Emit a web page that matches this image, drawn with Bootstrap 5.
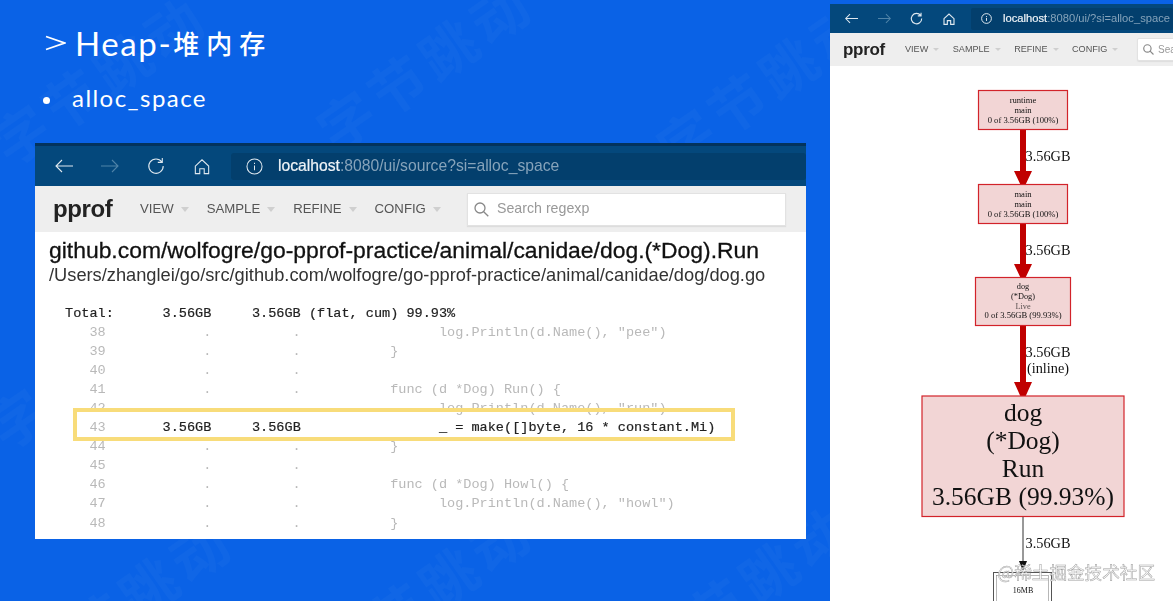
<!DOCTYPE html>
<html lang="zh">
<head>
<meta charset="utf-8">
<title>Heap</title>
<link href="https://cdn.jsdelivr.net/npm/bootstrap@5.3.0/dist/css/bootstrap.min.css" rel="stylesheet">
<style>
html,body{width:1173px;height:601px;overflow:hidden;margin:0;background:#0a62e6;}
.stage{width:1173px;height:601px;}
.slide{width:830px;height:601px;background:#0a62e6;position:relative;overflow:hidden;padding:24px 24px 0 35px;flex:none;}
.wm{position:absolute;font-family:"Noto Sans CJK SC",sans-serif;font-weight:700;font-size:56px;color:rgba(255,255,255,.028);transform:rotate(-35deg);white-space:nowrap;letter-spacing:6px;}
.ttl{font-family:Lato,sans-serif;font-size:33px;line-height:38px;color:#fff;margin:0 0 0 10px;letter-spacing:1.6px;font-weight:400;position:relative;display:flex;align-items:center;}
.ttl svg{margin-right:9px;flex:none;}
.ttl .cj{font-family:"Noto Sans CJK SC",sans-serif;font-size:26px;font-weight:500;letter-spacing:7px;margin-left:1px;}
.bul{font-family:Lato,sans-serif;font-size:24px;line-height:30px;color:#fff;letter-spacing:1.45px;margin:21px 0 0 8px;position:relative;}
.bul i{display:inline-block;width:7px;height:7px;border-radius:50%;background:#fff;margin-right:22px;vertical-align:3px;}
.win{background:#fff;position:relative;overflow:hidden;filter:blur(.35px);}
.big{width:771px;height:396px;margin-top:30px;}
.ubar{background:#04487c;border-top:3px solid #03335c;height:43px;padding-left:20px;}
.ubar svg{display:block;flex:none;}
.field{background:#033f6d;height:27px;border-radius:3px;color:#fff;font-family:"Liberation Sans",sans-serif;font-size:15.7px;flex:1;padding-left:15px;margin-left:21px;white-space:nowrap;overflow:hidden;}
.field b{font-weight:400;color:#eef3f7;margin-left:15px;-webkit-text-stroke:.2px #eef3f7;}
.field span{color:#86a3ba;}
.topn{background:#eeeeee;height:46px;padding-left:18px;font-family:"Liberation Sans",sans-serif;color:#555;}
.logo{font-weight:700;font-size:24px;color:#222;letter-spacing:-.4px;width:87px;}
.mi{font-size:13.2px;display:flex;align-items:center;white-space:nowrap;margin-right:18px;}
.mi::after{content:"";margin-left:7px;margin-top:1px;border:4.5px solid transparent;border-top:5px solid #cfcfcf;border-bottom:0;}
.sbox{background:#fff;border:1px solid #e2e2e2;height:33px;width:319px;margin-left:auto;margin-right:20px;color:#999;font-size:14.2px;padding-left:6px;box-shadow:0 1px 1px #ddd;}
.h-fn{font-family:"Liberation Sans",sans-serif;font-size:22.9px;font-weight:400;color:#111;-webkit-text-stroke:.3px #111;margin:6px 0 0 14px;line-height:24px;white-space:nowrap;}
.h-fl{font-family:"Liberation Sans",sans-serif;font-size:18.25px;color:#333;margin:2px 0 0 14px;line-height:22px;white-space:nowrap;}
.src{font-family:"Liberation Mono",monospace;font-size:13.55px;line-height:19.05px;color:#b9b9b9;margin:18px 0 0 30px;overflow:visible;}
.src b{font-weight:400;color:#222;-webkit-text-stroke:.2px #222;}
.hl{position:absolute;left:38px;top:265px;width:662px;height:33px;border:4px solid #f8dc7a;}
.side{width:343px;height:597px;margin-top:4px;flex:none;}
.side .ubar{height:29px;border-top:0;padding-left:15px;}
.side .field{height:22px;font-size:11.2px;margin-left:16px;padding-left:10px;border-radius:2px;}
.side .field b{margin-left:11px;}
.side .topn{height:33px;padding-left:13px;}
.side .logo{font-size:17px;width:62px;letter-spacing:-.3px;}
.side .mi{font-size:9.1px;margin-right:13.5px;}
.side .mi::after{margin-left:5px;border-width:3px;border-top-width:3.5px;}
.side .sbox{width:60px;height:23px;margin-right:-24px;font-size:10px;padding-left:5px;border-radius:2px;}
.gr{display:block;}
.gr text{font-family:"Liberation Serif",serif;fill:#111;text-anchor:middle;}
.gr rect.nd{fill:#f2d5d5;stroke:#d2232a;stroke-width:1.2;}
.stamp{position:absolute;right:18px;bottom:18px;font-family:"Noto Sans CJK SC",sans-serif;font-size:17.6px;line-height:22px;color:rgba(255,255,255,.85);-webkit-text-stroke:.5px #a0a0a0;white-space:nowrap;}
</style>
</head>
<body>
<main class="stage d-flex">
<section class="slide">
  <span class="wm" style="left:-26px;top:36px">字节跳动</span>
  <span class="wm" style="left:300px;top:22px">字节跳动</span>
  <span class="wm" style="left:640px;top:40px">字节跳动</span>
  <span class="wm" style="left:-30px;top:320px">字节跳动</span>
  <span class="wm" style="left:0px;top:560px">字节跳动</span>
  <span class="wm" style="left:300px;top:550px">字节跳动</span>
  <span class="wm" style="left:620px;top:545px">字节跳动</span>
  <h1 class="ttl"><svg width="21" height="16" viewBox="0 0 21 16" fill="none" stroke="#fff" stroke-width="1.8"><path d="M1 1.500 19.500 8 1 14.500"/></svg>Heap-<span class="cj">堆内存</span></h1>
  <p class="bul"><i></i>alloc_space</p>
  <div class="win big">
    <div class="ubar d-flex align-items-center">
      <svg width="18" height="14" viewBox="0 0 18 14" fill="none" stroke="#dfe8ef" stroke-width="1.1"><path d="M18 7H1M7 1 1 7l6 6"/></svg>
      <svg style="margin-left:28px" width="18" height="14" viewBox="0 0 18 14" fill="none" stroke="#4f83a8" stroke-width="1.1"><path d="M0 7h17M11 1l6 6-6 6"/></svg>
      <svg style="margin-left:28px" width="18" height="18" viewBox="0 0 20 20" fill="none" stroke="#dfe8ef" stroke-width="1.2"><path d="M16.500 5.500A8 8 0 1 0 18 10M17 1v5h-5"/></svg>
      <svg style="margin-left:29px" width="16" height="17" viewBox="0 0 18 18" fill="none" stroke="#dfe8ef" stroke-width="1.2"><path d="M1.500 8.500 9 1.500l7.500 7V17H11.500v-5.500h-5V17H1.500Z"/></svg>
      <div class="field d-flex align-items-center">
        <svg width="17" height="17" viewBox="0 0 18 18" fill="none" stroke="#dfe8ef" stroke-width="1.1"><circle cx="9" cy="9" r="8"/><path d="M9 8v5M9 5v1.400"/></svg>
        <b>localhost</b><span>:8080/ui/source?si=alloc_space</span>
      </div>
    </div>
    <div class="topn d-flex align-items-center">
      <span class="logo">pprof</span>
      <span class="mi">VIEW</span>
      <span class="mi">SAMPLE</span>
      <span class="mi">REFINE</span>
      <span class="mi">CONFIG</span>
      <div class="sbox d-flex align-items-center">
        <svg class="me-2" width="15" height="15" viewBox="0 0 15 15" fill="none" stroke="#888" stroke-width="1.3"><circle cx="6" cy="6" r="5"/><path d="m9.700 9.700 4.600 4.600"/></svg>Search regexp
      </div>
    </div>
    <h2 class="h-fn">github.com/wolfogre/go-pprof-practice/animal/canidae/dog.(*Dog).Run</h2>
    <p class="h-fl">/Users/zhanglei/go/src/github.com/wolfogre/go-pprof-practice/animal/canidae/dog/dog.go</p>
<pre class="src"><b>Total:      3.56GB     3.56GB (flat, cum) 99.93%</b>
   38            .          .                 log.Println(d.Name(), "pee")
   39            .          .           }
   40            .          .
   41            .          .           func (d *Dog) Run() {
   42            .          .                 log.Println(d.Name(), "run")
   43       <b>3.56GB     3.56GB                 _ = make([]byte, 16 * constant.Mi)</b>
   44            .          .           }
   45            .          .
   46            .          .           func (d *Dog) Howl() {
   47            .          .                 log.Println(d.Name(), "howl")
   48            .          .           }</pre>
    <div class="hl"></div>
  </div>
</section>
<section class="win side">
  <div class="ubar d-flex align-items-center">
    <svg width="13" height="11" viewBox="0 0 18 14" fill="none" stroke="#dfe8ef" stroke-width="1.4"><path d="M18 7H1M7 1 1 7l6 6"/></svg>
    <svg style="margin-left:20px" width="13" height="11" viewBox="0 0 18 14" fill="none" stroke="#4f83a8" stroke-width="1.4"><path d="M0 7h17M11 1l6 6-6 6"/></svg>
    <svg style="margin-left:19px" width="13" height="13" viewBox="0 0 20 20" fill="none" stroke="#dfe8ef" stroke-width="1.700"><path d="M16.500 5.500A8 8 0 1 0 18 10M17 1v5h-5"/></svg>
    <svg style="margin-left:20px" width="12" height="12" viewBox="0 0 18 18" fill="none" stroke="#dfe8ef" stroke-width="1.700"><path d="M1.500 8.500 9 1.500l7.500 7V17H11.500v-5.500h-5V17H1.500Z"/></svg>
    <div class="field d-flex align-items-center">
      <svg width="11" height="11" viewBox="0 0 18 18" fill="none" stroke="#dfe8ef" stroke-width="1.600"><circle cx="9" cy="9" r="8"/><path d="M9 8v5M9 5v1.400"/></svg>
      <b>localhost</b><span>:8080/ui/?si=alloc_space</span>
    </div>
  </div>
  <div class="topn d-flex align-items-center">
    <span class="logo">pprof</span>
    <span class="mi">VIEW</span>
    <span class="mi">SAMPLE</span>
    <span class="mi">REFINE</span>
    <span class="mi">CONFIG</span>
    <div class="sbox d-flex align-items-center">
      <svg class="me-1" width="11" height="11" viewBox="0 0 15 15" fill="none" stroke="#888" stroke-width="1.600"><circle cx="6" cy="6" r="5"/><path d="m9.700 9.700 4.600 4.600"/></svg>Search
    </div>
  </div>
  <!-- graph coordinates: page x minus 830, page y minus 66 -->
  <svg class="gr" width="343" height="535" viewBox="830 66 343 535">
    <path d="M1023 130V172M1023 223V265M1023 326V384" stroke="#c00000" stroke-width="6" fill="none"/>
    <path d="M1014 171h18l-9 19ZM1014 264h18l-9 19ZM1014 382h18l-9 20Z" fill="#c00000"/>
    <rect class="nd" x="978.500" y="90.500" width="89" height="39"/>
    <text x="1023" y="103" font-size="8.600">runtime</text><text x="1023" y="113" font-size="8.600">main</text><text x="1023" y="122.500" font-size="8.600">0 of 3.56GB (100%)</text>
    <text x="1048" y="161" font-size="14.300">3.56GB</text>
    <rect class="nd" x="978.500" y="184.500" width="89" height="39"/>
    <text x="1023" y="197" font-size="8.600">main</text><text x="1023" y="207" font-size="8.600">main</text><text x="1023" y="216.500" font-size="8.600">0 of 3.56GB (100%)</text>
    <text x="1048" y="255" font-size="14.300">3.56GB</text>
    <rect class="nd" x="975.500" y="277.500" width="95" height="48"/>
    <text x="1023" y="289" font-size="8.300">dog</text><text x="1023" y="299" font-size="8.300">(*Dog)</text><text x="1023" y="308.500" font-size="8.300" fill-opacity=".7">Live</text><text x="1023" y="318" font-size="8.600">0 of 3.56GB (99.93%)</text>
    <text x="1048" y="357" font-size="14.300">3.56GB</text><text x="1048" y="373" font-size="14.300">(inline)</text>
    <rect class="nd" x="922" y="396" width="202" height="120.500"/>
    <text x="1023" y="421" font-size="25.500">dog</text><text x="1023" y="449" font-size="25.500">(*Dog)</text><text x="1023" y="477" font-size="25.500">Run</text><text x="1023" y="505" font-size="25.500">3.56GB (99.93%)</text>
    <path d="M1023 517V564" stroke="#333" stroke-width="1"/>
    <path d="M1019 561h8l-4 10Z" fill="#111"/>
    <text x="1048" y="548" font-size="14.300">3.56GB</text>
    <rect x="993.500" y="572.500" width="58" height="40" fill="#fff" stroke="#555"/>
    <rect x="996.500" y="575.500" width="52" height="34" fill="#fff" stroke="#888" stroke-width=".6"/>
    <text x="1023" y="593" font-size="8">16MB</text>
  </svg>
  <span class="stamp">@稀土掘金技术社区</span>
</section>
</main>
<script src="https://cdn.jsdelivr.net/npm/bootstrap@5.3.0/dist/js/bootstrap.bundle.min.js"></script>
</body>
</html>
